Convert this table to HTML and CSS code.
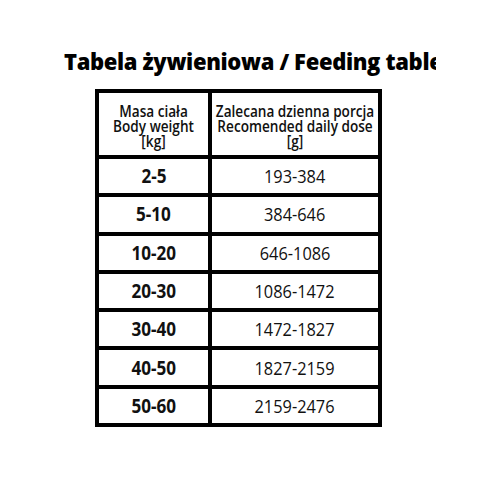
FILE: index.html
```html
<!DOCTYPE html>
<html lang="pl">
<head>
<meta charset="utf-8">
<title>Tabela żywieniowa</title>
<link rel="stylesheet" href="styles.css">
</head>
<body>
<main class="page">
  <h1 class="title">Tabela żywieniowa / Feeding table</h1>
  <div class="table">
    <div class="cell head"><span class="txt">Masa ciała<br>Body weight<br>[kg]</span></div>
    <div class="cell head"><span class="txt">Zalecana dzienna porcja<br>Recomended daily dose<br>[g]</span></div>
    <div class="cell key"><span class="txt">2-5</span></div><div class="cell val"><span class="txt">193-384</span></div>
    <div class="cell key"><span class="txt">5-10</span></div><div class="cell val"><span class="txt">384-646</span></div>
    <div class="cell key"><span class="txt">10-20</span></div><div class="cell val"><span class="txt">646-1086</span></div>
    <div class="cell key"><span class="txt">20-30</span></div><div class="cell val"><span class="txt">1086-1472</span></div>
    <div class="cell key"><span class="txt">30-40</span></div><div class="cell val"><span class="txt">1472-1827</span></div>
    <div class="cell key"><span class="txt">40-50</span></div><div class="cell val"><span class="txt">1827-2159</span></div>
    <div class="cell key"><span class="txt">50-60</span></div><div class="cell val"><span class="txt">2159-2476</span></div>
  </div>
</main>
</body>
</html>
```
FILE: styles.css
```css
html, body {
  margin: 0;
  padding: 0;
  background: #fff;
}
.page {
  width: 480px;
  height: 480px;
  padding-top: 44px;
  box-sizing: border-box;
}
.title {
  margin: 0;
  width: 436px;
  padding-left: 64px;
  box-sizing: border-box;
  overflow: hidden;
  white-space: nowrap;
  font-family: "Open Sans", sans-serif;
  font-weight: 800;
  font-size: 22px;
  letter-spacing: -0.35px;
  line-height: 34px;
  color: #000;
}
.table {
  margin-top: 11px;
  margin-left: 95px;
  display: grid;
  grid-template-columns: 109px 166px;
  grid-template-rows: 62px repeat(7, 34.3px);
  gap: 4px;
  padding: 4px;
  width: max-content;
  background: #000;
}
.cell {
  background: #fff;
  display: flex;
  align-items: center;
  justify-content: center;
  text-align: center;
  font-family: "Open Sans", sans-serif;
  color: #111;
  overflow: visible;
}
.txt {
  display: inline-block;
  white-space: nowrap;
  flex: none;
  transform-origin: center center;
}
.head {
  font-size: 17px;
  line-height: 15px;
  font-weight: 600;
  padding-top: 2px;
}
.head .txt {
  transform: scaleX(0.8);
}
.key {
  font-size: 19px;
  font-weight: 700;
}
.key .txt {
  transform: scaleX(0.9);
}
.val {
  font-size: 19px;
  font-weight: 400;
}
.val .txt {
  transform: scaleX(0.86);
}
```
